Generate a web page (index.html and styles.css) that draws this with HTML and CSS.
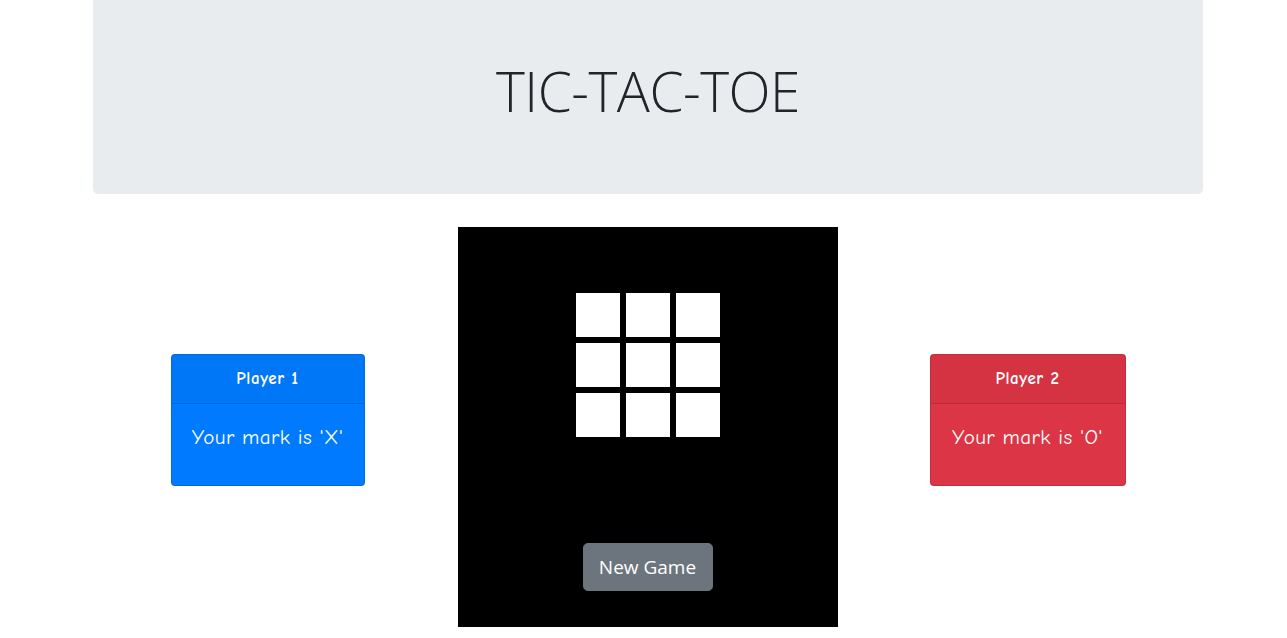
FILE: index.html
```html
<!DOCTYPE html>
<html lang="en">
<head>
<meta charset="utf-8">
<title>Tic-Tac-Toe</title>
<link rel="stylesheet" href="styles.css">
</head>
<body>
<div class="container">
  <header class="jumbotron">
    <h1 class="title">TIC-TAC-TOE</h1>
  </header>
  <main class="game">
    <section class="player-card player-1">
      <div class="card-header">Player 1</div>
      <div class="card-body"><p class="card-text">Your mark is 'X'</p></div>
    </section>
    <section class="board">
      <div class="grid">
        <div class="cell"></div><div class="cell"></div><div class="cell"></div>
        <div class="cell"></div><div class="cell"></div><div class="cell"></div>
        <div class="cell"></div><div class="cell"></div><div class="cell"></div>
      </div>
      <button class="btn-new">New Game</button>
    </section>
    <section class="player-card player-2">
      <div class="card-header">Player 2</div>
      <div class="card-body"><p class="card-text">Your mark is 'O'</p></div>
    </section>
  </main>
</div>
</body>
</html>
```
FILE: styles.css
```css
* { box-sizing: border-box; }
html, body { margin: 0; padding: 0; background: #fff; }
body {
  font-family: "Open Sans", "Liberation Sans", sans-serif;
  color: #212529;
  padding-left: 9px;
}

.container {
  width: 1110px;
  margin: 0 auto;
}

.jumbotron {
  background: #e9ecef;
  height: 194px;
  border-radius: 0 0 5px 5px;
  display: flex;
  align-items: center;
  justify-content: center;
  margin-bottom: 33px;
}
.title {
  margin: 0 0 12px 0;
  font-family: "Open Sans", "Liberation Sans", sans-serif;
  font-weight: 300;
  font-size: 55px;
  line-height: 1.2;
  color: #212529;
  letter-spacing: -0.5px;
}

.game {
  display: flex;
  justify-content: center;
  align-items: center;
  gap: 92px;
}

.player-card {
  color: #fff;
  border: 1px solid rgba(0,0,0,.125);
  border-radius: 4px;
  margin-bottom: 15px;
  font-family: "Comic Sans MS", "Comic Neue", "Lato", "Open Sans", cursive;
  text-align: center;
}
.player-1 { background: #007bff; width: 194px; margin-right: 1px; }
.player-2 { background: #dc3545; width: 196px; }

.card-header {
  padding: 12px 20px;
  font-size: 17px;
  line-height: 24px;
  font-weight: 700;
  letter-spacing: 0.6px;
  background: rgba(0,0,0,.03);
  border-bottom: 1px solid rgba(0,0,0,.125);
}
.card-body {
  padding: 21px 4px 20px;
}
.card-text {
  margin: 0 0 16px;
  font-size: 21px;
  line-height: 24px;
  font-weight: 500;
  letter-spacing: 0.4px;
  white-space: nowrap;
}

.board {
  width: 380px;
  height: 400px;
  background: #000;
  display: flex;
  flex-direction: column;
  align-items: center;
  padding: 66px 0 36px;
}
.grid {
  display: grid;
  grid-template-columns: repeat(3, 44px);
  grid-template-rows: repeat(3, 44px);
  gap: 6px;
}
.cell { background: #fff; }

.btn-new {
  margin-top: auto;
  width: 130px;
  height: 48px;
  background: #6c757d;
  color: #fff;
  border: 1px solid #6c757d;
  border-radius: 4.8px;
  font-family: "Open Sans", "Liberation Sans", sans-serif;
  font-size: 19px;
  line-height: 1.5;
  padding: 0;
  cursor: pointer;
}
```
